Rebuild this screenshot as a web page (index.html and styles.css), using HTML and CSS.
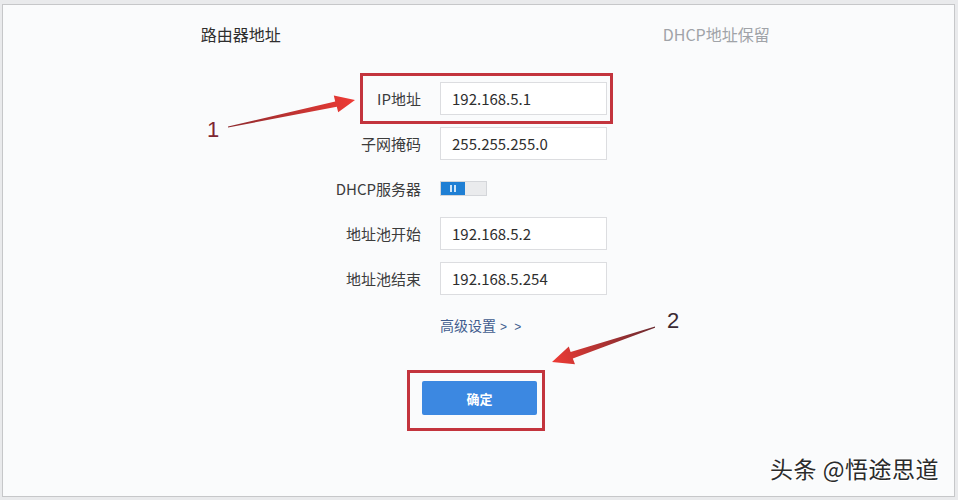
FILE: index.html
```html
<!DOCTYPE html>
<html lang="zh-CN">
    <head>
        <meta charset="utf-8" />
        <title>路由器地址</title>
        <link rel="stylesheet" href="styles.css">
    </head>
    <body>
        <div class="frame">
            <div class="tabs">
                <div class="tab active">路由器地址</div>
                <div class="tab">DHCP地址保留</div>
            </div>

            <div class="form">
                <label class="label">IP地址</label>
                <div class="input">192.168.5.1</div>

                <label class="label">子网掩码</label>
                <div class="input">255.255.255.0</div>

                <label class="label">DHCP服务器</label>
                <div class="switch-cell">
                    <span class="switch">
                        <span class="switch-on"><i></i><i></i></span>
                        <span class="switch-off"></span>
                    </span>
                </div>

                <label class="label">地址池开始</label>
                <div class="input">192.168.5.2</div>

                <label class="label">地址池结束</label>
                <div class="input">192.168.5.254</div>
            </div>

            <div class="more-row">
                <a class="more">高级设置<span class="arrows">&gt; &gt;</span></a>
            </div>

            <div class="actions">
                <button class="btn-ok">确定</button>
            </div>

            <div class="watermark">头条 @悟途思道</div>
        </div>

        <!-- annotations drawn over the screenshot -->
        <svg class="marks" width="958" height="500" viewBox="0 0 958 500">
            <defs>
                <linearGradient id="arrow1" x1="228" y1="126" x2="355" y2="100" gradientUnits="userSpaceOnUse">
                    <stop offset="0" stop-color="#8e2a2e" />
                    <stop offset="1" stop-color="#ee3b35" />
                </linearGradient>
                <linearGradient id="arrow2" x1="655" y1="327" x2="552" y2="362" gradientUnits="userSpaceOnUse">
                    <stop offset="0" stop-color="#6a2a30" />
                    <stop offset="1" stop-color="#ee3b35" />
                </linearGradient>
            </defs>
            <rect x="361.5" y="74.5" width="250" height="48" fill="none" stroke="#c3343d" stroke-width="3" />
            <rect x="408.5" y="371.5" width="135" height="58" fill="none" stroke="#c3343d" stroke-width="3" />
            <polygon fill="url(#arrow1)" points="228,126.5 335.2,101.4 333.8,95.6 355,100 338.2,112.2 336.8,106.8 228,127.5" />
            <polygon fill="url(#arrow2)" points="655,326.5 570.6,352 568.8,346.4 552,362 575,364.2 572.8,358.6 655,327.8" />
        </svg>
        <span class="num num-1">1</span>
        <span class="num num-2">2</span>
    </body>
</html>
```

FILE: styles.css
```css
html, body {
    margin: 0;
    padding: 0;
}
body {
    position: relative;
    width: 958px;
    height: 500px;
    background: #e9eaec;
    font-family: "Noto Sans CJK SC", "Noto Sans", sans-serif;
    color: #333;
    padding: 4px 3px 3px 2px;
    box-sizing: border-box;
}
.frame {
    position: relative;
    height: 100%;
    border: 1px solid #c6c7c9;
    background: #fafbfc;
    box-sizing: border-box;
}
.tabs {
    display: grid;
    grid-template-columns: 1fr 1fr;
    height: 58px;
    align-items: center;
}
.tab {
    text-align: center;
    font-size: 16px;
    color: #a0a3a8;
}
.tab.active {
    color: #2e2e2e;
}
.form {
    display: grid;
    grid-template-columns: 122px 167px;
    grid-auto-rows: 33px;
    column-gap: 19px;
    row-gap: 12px;
    margin: 19px 0 0 296px;
    align-items: center;
}
.label {
    text-align: right;
    font-size: 15px;
    color: #3c3c3c;
}
.input {
    height: 33px;
    box-sizing: border-box;
    border: 1px solid #dcdde0;
    background: #fff;
    padding-left: 11px;
    font-size: 15px;
    line-height: 31px;
    color: #2e2e2e;
}
.switch-cell {
    display: flex;
    align-items: center;
}
.switch {
    display: flex;
    width: 47px;
    height: 15px;
    border: 1px solid #d4d6da;
    box-sizing: border-box;
}
.switch-on {
    display: flex;
    justify-content: center;
    align-items: center;
    gap: 2px;
    width: 24px;
    background: #1f7fd4;
}
.switch-on i {
    width: 2px;
    height: 7px;
    background: #cfe4f7;
}
.switch-off {
    flex: 1;
    background: #eaebed;
}
.more-row {
    margin: 17px 0 0 437px;
    height: 24px;
}
.more {
    font-size: 14px;
    line-height: 24px;
    color: #3f5c8e;
}
.arrows {
    font-family: "Liberation Sans", sans-serif;
    font-size: 12px;
    letter-spacing: 2px;
    margin-left: 4px;
}
.actions {
    display: flex;
    margin: 45px 0 0 419px;
}
.btn-ok {
    width: 115px;
    height: 34px;
    border: none;
    border-radius: 2px;
    background: #3c88e1;
    color: #fff;
    font-family: "Noto Sans CJK SC", sans-serif;
    font-size: 13px;
    font-weight: bold;
}
.watermark {
    position: absolute;
    right: 15px;
    bottom: 11px;
    font-size: 23px;
    color: #2b2b2b;
    letter-spacing: 0.5px;
    text-shadow: 1px 1px 0 #fff, -1px -1px 0 #fff;
}
.marks {
    position: absolute;
    left: 0;
    top: 0;
}
.num {
    position: absolute;
    font-family: "Liberation Sans", sans-serif;
    font-size: 22px;
    line-height: 1;
}
.num-1 {
    left: 207px;
    top: 119px;
    color: #7e2632;
}
.num-2 {
    left: 667px;
    top: 310px;
    color: #3b2a33;
}
```
